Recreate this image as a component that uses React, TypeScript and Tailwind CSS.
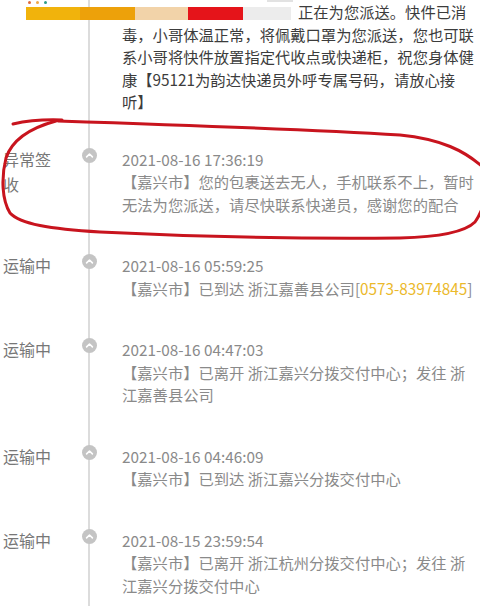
import React from "react";

type Ev = { label: string; time: string; detail: React.ReactNode };

const events: Ev[] = [
  {
    label: "异常签收",
    time: "2021-08-16 17:36:19",
    detail: "【嘉兴市】您的包裹送去无人，手机联系不上，暂时无法为您派送，请尽快联系快递员，感谢您的配合",
  },
  {
    label: "运输中",
    time: "2021-08-16 05:59:25",
    detail: (
      <>
        【嘉兴市】已到达 浙江嘉善县公司[<span className="text-[#ebb92b]">0573-83974845</span>]
      </>
    ),
  },
  {
    label: "运输中",
    time: "2021-08-16 04:47:03",
    detail: "【嘉兴市】已离开 浙江嘉兴分拨交付中心；发往 浙江嘉善县公司",
  },
  {
    label: "运输中",
    time: "2021-08-16 04:46:09",
    detail: "【嘉兴市】已到达 浙江嘉兴分拨交付中心",
  },
  {
    label: "运输中",
    time: "2021-08-15 23:59:54",
    detail: "【嘉兴市】已离开 浙江杭州分拨交付中心；发往 浙江嘉兴分拨交付中心",
  },
];

function Node() {
  return (
    <div className="absolute top-0 left-0 size-[15px] rounded-full bg-[#c4c4c4] flex items-center justify-center">
      <svg width="15" height="15" viewBox="0 0 15 15" fill="none">
        <polyline points="4.6,8.9 7.5,6 10.4,8.9" stroke="#ffffff" strokeWidth="1.6" strokeLinecap="round" strokeLinejoin="round" />
      </svg>
    </div>
  );
}

function Row({ label, node, children, pb }: { label?: string; node?: boolean; children: React.ReactNode; pb: string }) {
  return (
    <div className="flex">
      <div className="w-[82px] shrink-0 pl-[3px]">
        {label && <div className="w-[52px] mt-[-1px] text-[16px] leading-[25px] text-[#777777]">{label}</div>}
      </div>
      <div className="relative w-[15px] shrink-0 flex pl-[6px]">
        <div className="w-[2px] bg-[#dcdcdc]" />
        {node && <Node />}
      </div>
      <div className={`w-[354px] ml-[25px] ${pb}`}>{children}</div>
    </div>
  );
}

export default function App() {
  return (
    <div className="relative w-[480px] h-[606px] overflow-hidden bg-white font-['Noto_Sans_CJK_SC',sans-serif]">
      <div className="flex flex-col">
        <Row pb="pb-[35px]">
          <p className="indent-[176px] text-[15.3px] leading-[22.5px] text-[#3c3c3c]">
            正在为您派送。快件已消毒，小哥体温正常，将佩戴口罩为您派送，您也可联系小哥将快件放置指定代收点或快递柜，祝您身体健康【95121为韵达快递员外呼专属号码，请放心接听】
          </p>
        </Row>
        {events.map((e, i) => (
          <Row key={i} label={e.label} node pb="pb-[39px]">
            <div className="text-[15.3px] leading-[22.5px] text-[#8a8a8a]">
              <div>{e.time}</div>
              <div>{e.detail}</div>
            </div>
          </Row>
        ))}
      </div>

      {/* colored bar overlay at top */}
      <div className="absolute top-[7px] left-[26px] flex h-[13px]">
        <div className="w-[54px] bg-[#f1b30c]" />
        <div className="w-[55px] bg-[#eda10a]" />
        <div className="w-[53px] bg-[#f2d3a9]" />
        <div className="w-[55px] bg-[#e5141a]" />
        <div className="w-[48px] bg-[#ececec]" />
      </div>
      <div className="absolute top-[1px] left-[28px] flex gap-[5px]">
        <div className="size-[3px] rounded-full bg-[#e06a3c]" />
        <div className="size-[3px] rounded-full bg-[#f0a848]" />
        <div className="size-[3px] rounded-full bg-[#2d9c86]" />
      </div>
      <div className="absolute top-0 left-[267px] w-[26px] h-[2px] bg-[#e2e2e2]" />

      {/* red hand-drawn annotation */}
      <svg className="absolute inset-0 pointer-events-none" width="480" height="606" viewBox="0 0 480 606" fill="none">
        <path d="M13,124 Q35,119 62,120" stroke="#c8141e" strokeWidth="3" strokeLinecap="round" />
        <path
          d="M56,121 C30,128 12,140 6,158 C1,178 2,200 10,213 C20,224 50,229 100,232 C180,236 300,239 400,238 C440,237 465,232 475,222 C480,215 484,205 486,195"
          stroke="#c8141e"
          strokeWidth="3"
          strokeLinecap="round"
        />
        <path d="M58,121 C150,124 300,129 400,135 C440,139 465,150 486,170" stroke="#c8141e" strokeWidth="3" strokeLinecap="round" />
      </svg>
    </div>
  );
}
